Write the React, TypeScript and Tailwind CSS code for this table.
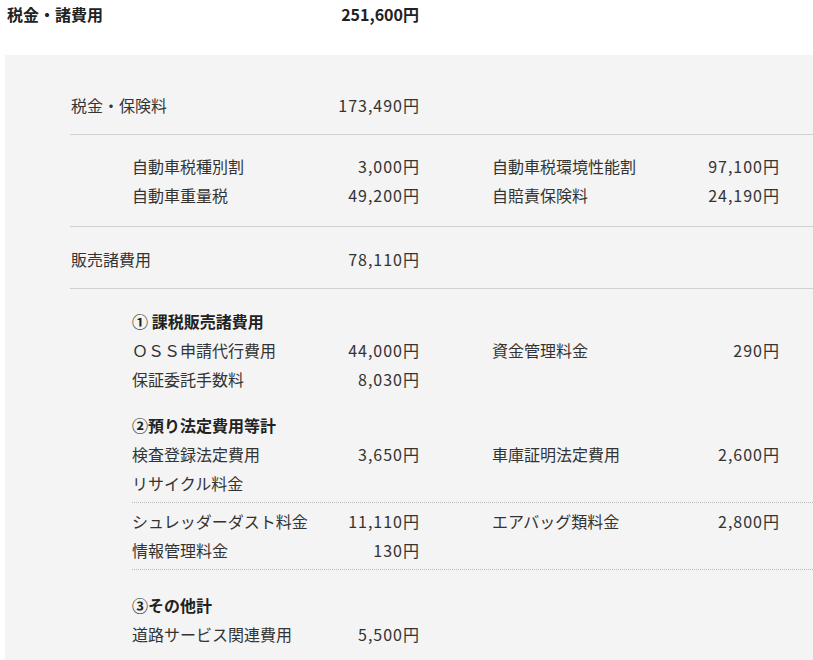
type Item = { label: string; value?: string };

function Amount({ value }: { value?: string }) {
  if (!value) return null;
  const num = value.replace("円", "");
  return (
    <span>
      <span className="tracking-[1px]">{num}</span>円
    </span>
  );
}

function Cell({ item }: { item?: Item }) {
  if (!item) return <div />;
  return (
    <div className="flex justify-between">
      <span>{item.label}</span>
      <Amount value={item.value} />
    </div>
  );
}

function Rows({ rows }: { rows: Array<[Item, Item?]> }) {
  return (
    <div className="grid grid-cols-[287px_287px] gap-x-[73px]">
      {rows.map(([l, r], i) => (
        <div key={i} className="contents">
          <Cell item={l} />
          <Cell item={r} />
        </div>
      ))}
    </div>
  );
}

function Heading({ children, className = "" }: { children: string; className?: string }) {
  return <p className={`font-bold text-[#222] ${className}`}>{children}</p>;
}

export default function App() {
  return (
    <div
      className="w-[813px] h-[660px] overflow-hidden bg-white text-[16px] leading-[29px] text-[#333]"
      style={{ fontFamily: '"Noto Sans CJK JP", "Noto Sans", sans-serif' }}
    >
      <div className="flex w-[419px] justify-between pl-[7px] font-bold text-[#222]">
        <span>税金・諸費用</span>
        <span>251,600円</span>
      </div>

      <div className="ml-[5px] mt-[26px] bg-[#f4f4f4] pt-[36px] pb-10">
        <div className="ml-[66px] flex w-[348px] justify-between">
          <span>税金・保険料</span>
          <Amount value="173,490円" />
        </div>
        <div className="ml-[65px] mt-[14px] border-t border-[#d0d0d0]" />
        <div className="ml-[127px] pt-[17px] pb-[16px]">
          <Rows
            rows={[
              [{ label: "自動車税種別割", value: "3,000円" }, { label: "自動車税環境性能割", value: "97,100円" }],
              [{ label: "自動車重量税", value: "49,200円" }, { label: "自賠責保険料", value: "24,190円" }],
            ]}
          />
        </div>
        <div className="ml-[65px] border-t border-[#d0d0d0]" />
        <div className="ml-[66px] mt-[18px] flex w-[348px] justify-between">
          <span>販売諸費用</span>
          <Amount value="78,110円" />
        </div>
        <div className="ml-[65px] mt-[14px] border-t border-[#d0d0d0]" />

        <div className="ml-[127px] pt-[18px]">
          <Heading>① 課税販売諸費用</Heading>
          <Rows
            rows={[
              [{ label: "ＯＳＳ申請代行費用", value: "44,000円" }, { label: "資金管理料金", value: "290円" }],
              [{ label: "保証委託手数料", value: "8,030円" }],
            ]}
          />
          <Heading className="mt-[17px]">②預り法定費用等計</Heading>
          <Rows
            rows={[
              [{ label: "検査登録法定費用", value: "3,650円" }, { label: "車庫証明法定費用", value: "2,600円" }],
              [{ label: "リサイクル料金" }],
            ]}
          />
          <div className="mt-[4px] border-t border-dotted border-[#bbb] pt-[4px] pb-[4px]">
            <Rows
              rows={[
                [{ label: "シュレッダーダスト料金", value: "11,110円" }, { label: "エアバッグ類料金", value: "2,800円" }],
                [{ label: "情報管理料金", value: "130円" }],
              ]}
            />
          </div>
          <div className="border-t border-dotted border-[#bbb]" />
          <Heading className="mt-[21px]">③その他計</Heading>
          <Rows rows={[[{ label: "道路サービス関連費用", value: "5,500円" }]]} />
        </div>
      </div>
    </div>
  );
}
